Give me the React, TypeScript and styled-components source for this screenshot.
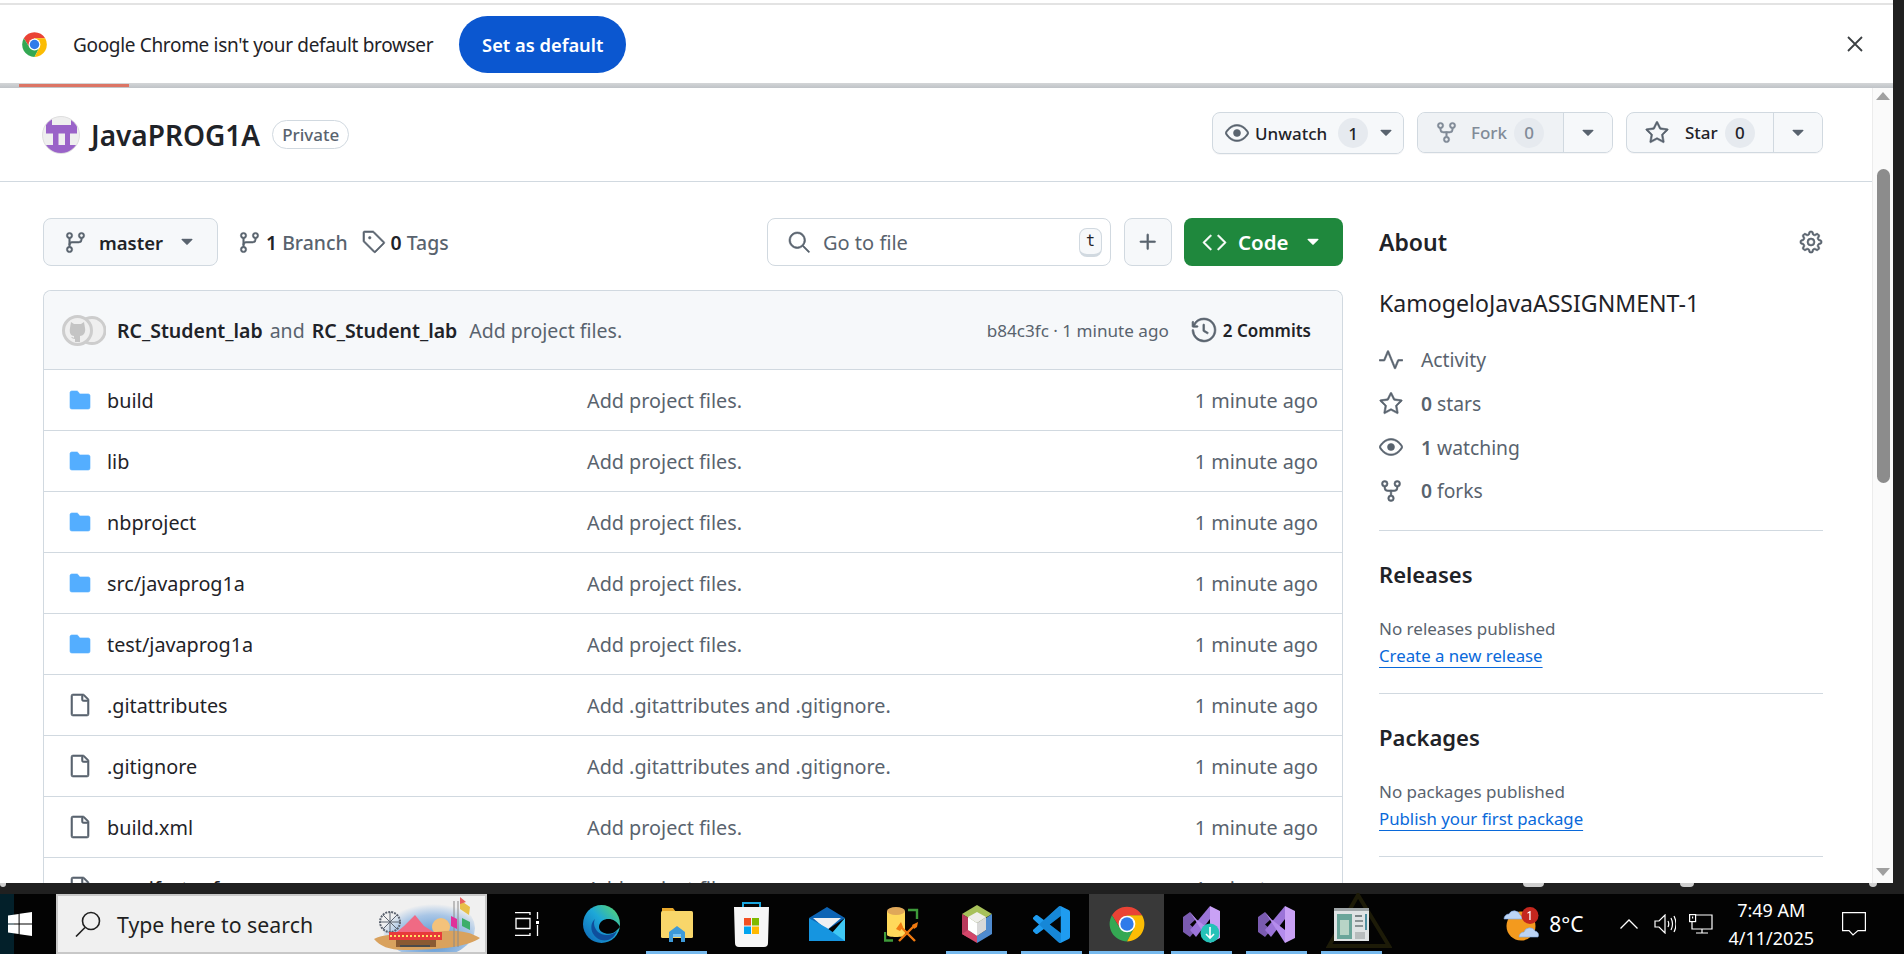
import React from "react";
import styled, { createGlobalStyle } from "styled-components";
import {
  GoCode,
  GoEye,
  GoFile,
  GoFileDirectoryFill,
  GoGear,
  GoGitBranch,
  GoHistory,
  GoPlus,
  GoPulse,
  GoRepoForked,
  GoSearch,
  GoStar,
  GoTag,
  GoTriangleDown,
} from "react-icons/go";

const FONT = `"Noto Sans", "Open Sans", "Liberation Sans", sans-serif`;

const GlobalStyle = createGlobalStyle`
  html, body {
    margin: 0;
    padding: 0;
    height: 100%;
    overflow: hidden;
    background: #000;
  }
  * {
    box-sizing: border-box;
  }
  body {
    font-family: ${FONT};
    color: #1f2328;
  }
`;

const Screen = styled.div`
  position: relative;
  width: 1904px;
  height: 954px;
  display: flex;
  flex-direction: column;
  overflow: hidden;
`;

const Desktop = styled.div`
  height: 883px;
  display: flex;
  background: #202020;
`;

const Browser = styled.div`
  width: 1893px;
  display: flex;
  flex-direction: column;
  background: #fff;
`;

const TopLine = styled.div`
  height: 5px;
  padding-top: 3px;
  background: #fff;
  &::after {
    content: "";
    display: block;
    height: 2px;
    background: #e3e3e3;
  }
`;

const Infobar = styled.div`
  position: relative;
  height: 78px;
  flex: none;
  display: flex;
  align-items: center;
  padding: 0 30px 0 21px;
  background: #fff;
`;

const InfoText = styled.span`
  margin: 2px 0 0 25px;
  font-size: 19px;
  letter-spacing: -0.33px;
`;

const DefaultButton = styled.button`
  height: 57px;
  width: 167px;
  margin-left: 26px;
  border: none;
  border-radius: 29px;
  background: #0b57d0;
  color: #fff;
  font-family: ${FONT};
  font-size: 18.3px;
  font-weight: 600;
`;

const CloseMark = styled.svg`
  margin-left: auto;
  width: 16px;
  height: 16px;
`;

const InfoEdge = styled.div`
  position: relative;
  height: 5px;
  flex: none;
  background: linear-gradient(#d4d6d8, #bfc3c7);
`;

const LoadBar = styled.div`
  position: absolute;
  left: 19px;
  top: 1px;
  width: 110px;
  height: 3px;
  background: #dc7565;
`;

const ViewRow = styled.div`
  flex: 1;
  min-height: 0;
  display: flex;
`;

const Page = styled.main`
  width: 1872px;
  overflow: hidden;
  svg[stroke-width="0"] {
    stroke-width: 0.6;
    flex: none;
  }
`;

const RepoHead = styled.header`
  height: 94px;
  display: flex;
  align-items: center;
  padding: 0 49px 0 42px;
  border-bottom: 1px solid #d1d9e0;
`;

const RepoAvatar = styled.svg`
  width: 38px;
  height: 38px;
  flex: none;
`;

const RepoName = styled.h1`
  margin: 0 0 0 11px;
  font-size: 28px;
  font-weight: 600;
`;

const PrivateLabel = styled.span`
  margin-left: 12px;
  height: 29px;
  padding: 0 9px;
  display: flex;
  align-items: center;
  border: 1px solid #d1d9e0;
  border-radius: 15px;
  color: #59636e;
  font-size: 17px;
  font-weight: 500;
`;

const HeadActions = styled.div`
  margin: 0 0 3px auto;
  display: flex;
  align-items: flex-start;
  gap: 13px;
`;

const ActionGroup = styled.div<{ $w: number; $raised?: boolean }>`
  width: ${(p) => p.$w}px;
  height: ${(p) => (p.$raised ? 42 : 41)}px;
  display: flex;
  border: 1px solid #d1d9e0;
  border-radius: 8px;
  background: #f6f8fa;
  overflow: hidden;
  box-shadow: 0 1px 0 rgba(31, 35, 40, 0.04);
  color: #59636e;
  font-size: 17px;
  font-weight: 500;
`;

const ActionMain = styled.div<{ $pad: number; $muted?: boolean }>`
  flex: 1;
  display: flex;
  align-items: center;
  padding-left: ${(p) => p.$pad}px;
  background: ${(p) => (p.$muted ? "#eff2f5" : "transparent")};
  color: ${(p) => (p.$muted ? "#818b98" : "#1f2328")};
`;

const ActionLabel = styled.span<{ $left: number }>`
  margin-left: ${(p) => p.$left}px;
`;

const Count = styled.span<{ $left: number }>`
  width: 30px;
  height: 30px;
  margin-left: ${(p) => p.$left}px;
  display: flex;
  align-items: center;
  justify-content: center;
  border-radius: 15px;
  background: #e6eaef;
  font-size: 17px;
`;

const ActionCaret = styled.div<{ $w: number; $split?: boolean }>`
  width: ${(p) => p.$w}px;
  flex: none;
  display: flex;
  align-items: center;
  justify-content: center;
  border-left: ${(p) => (p.$split ? "1px solid #d1d9e0" : "none")};
  background: #f6f8fa;
  color: #59636e;
`;

const Body = styled.div`
  display: grid;
  grid-template-columns: 1300px 444px;
  column-gap: 36px;
  padding: 36px 0 0 43px;
`;

const Toolbar = styled.div`
  height: 48px;
  display: flex;
  align-items: center;
  margin-bottom: 24px;
`;

const BranchButton = styled.div`
  width: 175px;
  height: 48px;
  display: flex;
  align-items: center;
  padding-left: 20px;
  border: 1px solid #d1d9e0;
  border-radius: 8px;
  background: #f6f8fa;
  color: #59636e;
`;

const BranchName = styled.span`
  margin: 0 14px 0 12px;
  color: #1f2328;
  font-size: 18.5px;
  font-weight: 600;
`;

const MetaLink = styled.span<{ $left: number }>`
  margin-left: ${(p) => p.$left}px;
  display: flex;
  align-items: center;
  gap: 5px;
  color: #59636e;
  font-size: 19.4px;
  font-weight: 500;
  strong {
    color: #1f2328;
    font-weight: 600;
  }
`;

const SearchBox = styled.div`
  width: 344px;
  height: 48px;
  margin-left: auto;
  display: flex;
  align-items: center;
  padding: 0 8px 0 19px;
  border: 1px solid #d1d9e0;
  border-radius: 8px;
  color: #59636e;
  font-size: 20px;
`;

const SearchText = styled.span`
  margin-left: 12px;
`;

const KeyHint = styled.kbd`
  width: 23px;
  height: 29px;
  margin-left: auto;
  display: flex;
  align-items: center;
  justify-content: center;
  border: 1px solid #d1d9e0;
  border-bottom-width: 3px;
  border-radius: 8px;
  background: #f6f8fa;
  color: #1f2328;
  font-family: "DejaVu Sans Mono", "Liberation Mono", monospace;
  font-size: 15px;
`;

const PlusButton = styled.div`
  width: 48px;
  height: 48px;
  margin-left: 13px;
  display: flex;
  align-items: center;
  justify-content: center;
  border: 1px solid #d1d9e0;
  border-radius: 8px;
  background: #f6f8fa;
  color: #59636e;
`;

const CodeButton = styled.div`
  width: 159px;
  height: 48px;
  margin-left: 12px;
  display: flex;
  align-items: center;
  padding-left: 18px;
  border-radius: 8px;
  background: #1f883d;
  color: #fff;
  font-size: 20.5px;
  font-weight: 600;
`;

const CodeLabel = styled.span`
  margin: 0 14px 0 11px;
`;

const FileTable = styled.div`
  border: 1px solid #d1d9e0;
  border-radius: 8px 8px 0 0;
  border-bottom: none;
`;

const CommitBar = styled.div`
  height: 78px;
  display: flex;
  align-items: center;
  padding: 0 31px 0 18px;
  border-radius: 8px 8px 0 0;
  background: #f6f8fa;
  color: #59636e;
  font-size: 19.5px;
`;

const Authors = styled.svg`
  width: 44px;
  height: 31px;
  flex: none;
  margin-right: 11px;
`;

const Author = styled.strong`
  color: #1f2328;
  font-weight: 600;
`;

const AndWord = styled.span`
  margin: 0 7px;
`;

const CommitMessage = styled.span`
  margin-left: 12px;
`;

const CommitHash = styled.span`
  margin-left: auto;
  font-size: 17.1px;
`;

const CommitCount = styled.span`
  margin-left: 22px;
  display: flex;
  align-items: center;
  gap: 6px;
  color: #1f2328;
  font-size: 17px;
  font-weight: 600;
  svg {
    color: #59636e;
  }
`;

const FileRow = styled.div`
  height: 61px;
  display: grid;
  grid-template-columns: 519px 1fr auto;
  align-items: center;
  padding: 0 24px;
  border-top: 1px solid #d1d9e0;
  font-size: 19.8px;
`;

const FileName = styled.span<{ $folder: boolean }>`
  display: flex;
  align-items: center;
  gap: 15px;
  color: #1f2328;
  svg {
    color: ${(p) => (p.$folder ? "#54aeff" : "#59636e")};
  }
`;

const FileMessage = styled.span`
  color: #59636e;
`;

const FileAge = styled.span`
  color: #59636e;
`;

const Side = styled.aside`
  display: flex;
  flex-direction: column;
`;

const AboutHead = styled.div`
  height: 48px;
  display: flex;
  align-items: center;
  justify-content: space-between;
  color: #59636e;
`;

const SideTitle = styled.h2<{ $size?: number }>`
  margin: 0;
  line-height: 30px;
  color: #1f2328;
  font-size: ${(p) => p.$size ?? 22}px;
  font-weight: 600;
`;

const Description = styled.p`
  margin: 22px 0 20px;
  line-height: 30px;
  font-size: 23.1px;
`;

const StatRow = styled.div`
  height: 43.7px;
  display: flex;
  align-items: center;
  gap: 18px;
  color: #59636e;
  font-size: 19.3px;
  strong {
    font-weight: 600;
  }
`;

const SideSection = styled.section`
  padding: 28px 0 24px;
  border-top: 1px solid #d1d9e0;
`;

const StatsEnd = styled.div`
  height: 17.2px;
`;

const SideNote = styled.p`
  margin: 26px 0 0;
  line-height: 27px;
  color: #59636e;
  font-size: 17px;
`;

const SideLink = styled.a`
  display: block;
  line-height: 27px;
  color: #0969da;
  font-size: 16.8px;
  text-decoration: underline;
  text-underline-offset: 5px;
`;

const Scrollbar = styled.div`
  width: 21px;
  flex: none;
  display: flex;
  flex-direction: column;
  align-items: center;
  padding: 4px 0 7px;
  border-left: 1px solid #ececec;
  background: #fafafa;
`;

const ArrowUp = styled.div`
  border: 7px solid transparent;
  border-top: none;
  border-bottom: 8px solid #a0a0a0;
`;

const ArrowDown = styled.div`
  margin-top: auto;
  border: 7px solid transparent;
  border-bottom: none;
  border-top: 8px solid #a0a0a0;
`;

const Thumb = styled.div`
  width: 13px;
  height: 314px;
  margin-top: 69px;
  border-radius: 7px;
  background: #8c8c8c;
`;

const EdgeStrip = styled.div`
  position: relative;
  height: 11px;
  flex: none;
  background: #202020;
`;

const StripMark = styled.span<{ $x: number; $w: number }>`
  position: absolute;
  left: ${(p) => p.$x}px;
  top: 0;
  width: ${(p) => p.$w}px;
  height: 4px;
  border-radius: 0 0 6px 6px;
  background: #cfcfcf;
`;

const Taskbar = styled.footer`
  position: relative;
  height: 60px;
  flex: none;
  display: flex;
  background: #030303;
  color: #fff;
`;

const StartArea = styled.div`
  width: 56px;
  flex: none;
  display: flex;
  align-items: center;
  padding-left: 8px;
  background: linear-gradient(90deg, #03202a 0 14px, #030303 14px);
`;

const SearchBar = styled.div`
  width: 431px;
  flex: none;
  display: flex;
  align-items: center;
  padding-left: 17px;
  border: 2px solid #c8c8c8;
  background: #f0f0f0;
  color: #1f1f1f;
  font-size: 21.3px;
`;

const SearchHint = styled.span`
  margin-left: 16px;
`;

const Doodle = styled.svg`
  width: 108px;
  height: 56px;
  margin-left: auto;
  flex: none;
  margin-right: 3px;
`;

const Slot = styled.div<{ $open?: boolean; $active?: boolean }>`
  position: relative;
  width: 75px;
  flex: none;
  display: flex;
  align-items: center;
  justify-content: center;
  background: ${(p) => (p.$active ? "#393939" : "transparent")};
  &::after {
    content: ${(p) => (p.$open ? '""' : "none")};
    position: absolute;
    left: ${(p) => (p.$active ? 0 : 7)}px;
    right: ${(p) => (p.$active ? 0 : 7)}px;
    bottom: 0;
    height: 3px;
    background: #76b9ed;
  }
`;

const Slots = styled.div`
  position: relative;
  z-index: 1;
  margin-left: 2px;
  display: flex;
`;

const GhostTriangle = styled.svg`
  position: absolute;
  left: 1326px;
  top: -1px;
  width: 66px;
  height: 56px;
`;

const Tray = styled.div`
  margin-left: auto;
  display: flex;
  align-items: center;
  padding-right: 38px;
`;

const Temperature = styled.span`
  margin: 0 36px 0 8px;
  font-size: 21px;
`;

const TrayIcon = styled.svg<{ $left: number }>`
  margin-left: ${(p) => p.$left}px;
  flex: none;
`;

const Clock = styled.div`
  margin: 0 28px 0 16px;
  display: flex;
  flex-direction: column;
  align-items: center;
  line-height: 28px;
  font-size: 18px;
`;

type RepoFile = { name: string; folder: boolean; message: string };

const FILES: RepoFile[] = [
  { name: "build", folder: true, message: "Add project files." },
  { name: "lib", folder: true, message: "Add project files." },
  { name: "nbproject", folder: true, message: "Add project files." },
  { name: "src/javaprog1a", folder: true, message: "Add project files." },
  { name: "test/javaprog1a", folder: true, message: "Add project files." },
  { name: ".gitattributes", folder: false, message: "Add .gitattributes and .gitignore." },
  { name: ".gitignore", folder: false, message: "Add .gitattributes and .gitignore." },
  { name: "build.xml", folder: false, message: "Add project files." },
  { name: "manifest.mf", folder: false, message: "Add project files." },
];

const ChromeLogo = ({ size }: { size: number }) => (
  <svg width={size} height={size} viewBox="0 0 48 48">
    <path fill="#ea4335" d="M5 13A22 22 0 0 1 43 13H24L15 29Z" />
    <path fill="#34a853" d="M5 13A22 22 0 0 0 24 46L33 29H15Z" />
    <path fill="#fbbc04" d="M43 13A22 22 0 0 1 24 46L33 29 24 13Z" />
    <circle cx="24" cy="24" r="10.5" fill="#fff" />
    <circle cx="24" cy="24" r="8.4" fill="#2f7bea" />
  </svg>
);

const WindowsLogo = () => (
  <svg width="24" height="24" viewBox="0 0 24 24" fill="#fff">
    <path d="M0 3.4 10.6 2v9.4H0ZM11.6 1.8 24 0v11.4H11.6ZM0 12.6h10.6V22L0 20.6ZM11.6 12.6H24V24l-12.4-1.8Z" />
  </svg>
);

const TaskViewIcon = () => (
  <svg width="24" height="24" viewBox="0 0 24 24" fill="none" stroke="#fff" strokeWidth="1.3">
    <path d="M0 .7h15V3M0 23.3h15V21M1 6.5h14v10H1ZM22.5 0v7M22.5 13v11" />
    <rect x="21" y="9" width="3" height="3" fill="#fff" stroke="none" />
  </svg>
);

const EdgeIcon = () => (
  <svg width="37" height="38" viewBox="0 0 37 38">
    <defs>
      <linearGradient id="edgeRing" x1="0" y1="1" x2="1" y2="0">
        <stop offset="0" stopColor="#0c62b4" />
        <stop offset="0.55" stopColor="#1ea8d8" />
        <stop offset="1" stopColor="#5fdc63" />
      </linearGradient>
    </defs>
    <ellipse cx="18.5" cy="19" rx="18.5" ry="19" fill="url(#edgeRing)" />
    <path fill="#030303" d="M37 22C33 14 25 12 19 16c-4 3-4 9 0 11 5 3 12 2 15-2l3-3Z" />
    <path fill="#0f4f9c" d="M12 14C6 19 7 31 18 35c8 2 14-3 16-9-6 5-14 5-19 1-4-4-5-9-3-13Z" />
  </svg>
);

const ExplorerIcon = () => (
  <svg width="32" height="36" viewBox="0 0 32 36">
    <path fill="#e9a92c" d="M1 2h11l3 4H1Z" />
    <rect x="0" y="5" width="32" height="27" rx="1.5" fill="#f8d66a" />
    <path fill="#3d9ad9" d="M8 26 16 20l8 6v10h-4v-6h-8v6H8Z" />
    <rect x="12" y="28" width="8" height="3" fill="#7ac4f2" />
  </svg>
);

const StoreIcon = () => (
  <svg width="35" height="47" viewBox="0 0 35 47">
    <path fill="none" stroke="#19a7e0" strokeWidth="2" d="M9 10V2h17v8" />
    <path fill="#f6f6f6" d="M0 6h35l-1 36a4 4 0 0 1-4 4H5a4 4 0 0 1-4-4Z" />
    <rect x="10" y="17" width="7" height="7.5" fill="#f25022" />
    <rect x="18" y="17" width="7" height="7.5" fill="#7fba00" />
    <rect x="10" y="25.5" width="7" height="7.5" fill="#00a4ef" />
    <rect x="18" y="25.5" width="7" height="7.5" fill="#ffb900" />
  </svg>
);

const MailIcon = () => (
  <svg width="36" height="34" viewBox="0 0 36 34">
    <path fill="#0c64b5" d="M0 11 18 0l18 11-18 12Z" />
    <path fill="#eef0f2" d="M4 11h28l-14 12Z" />
    <path fill="#3fc8f4" d="M36 11v23H16L36 11Z" />
    <path fill="#1695e0" d="M0 11v23h36L18 21Z" />
  </svg>
);

const DbToolIcon = () => (
  <svg width="35" height="35" viewBox="0 0 35 35">
    <path fill="#ffd95a" d="M3 4h18v24c0 1-4 2-9 2s-9-1-9-2Z" />
    <ellipse cx="12" cy="4" rx="9" ry="4" fill="#e0a859" />
    <path fill="none" stroke="#3e9a3a" strokeWidth="2.4" d="M24 3h9v9M1 25v8.5h8" />
    <path fill="none" stroke="#f07a10" strokeWidth="2.4" d="M15 34 31 18M17 20l14 14" />
    <path fill="#f07a10" d="M12 22l5-7 2 5-3 4ZM28 18l6-3-1 5-3 2Z" />
  </svg>
);

const NetbeansIcon = () => (
  <svg width="32" height="38" viewBox="0 0 32 38">
    <path fill="#a7c15a" d="M16 0 31 9 16 18 1 9Z" />
    <path fill="#b83a5c" d="M1 9v20l7 4V13Z" />
    <path fill="#d3466a" d="M1 29 16 38v-7L7 25Z" />
    <path fill="#4f8bcf" d="M31 9v20L16 38v-7l9-6V13Z" />
    <path fill="#eeeeea" d="M16 7 25 12 16 18 7 12Z" />
    <path fill="#fff" d="M7 12 16 18v13L7 25Z" />
    <path fill="#d8d8d8" d="M25 12 16 18v13l9-6Z" />
  </svg>
);

const VsCodeIcon = () => (
  <svg width="37" height="37" viewBox="0 0 24 24">
    <path
      fill="#1f9cf0"
      d="M23.15 2.587 18.21.21a1.494 1.494 0 0 0-1.705.29l-9.46 8.63-4.12-3.128a.999.999 0 0 0-1.276.057L.327 7.261A1 1 0 0 0 .326 8.74L3.899 12 .326 15.26a1 1 0 0 0 .001 1.479L1.65 17.94a.999.999 0 0 0 1.276.057l4.12-3.128 9.46 8.63a1.492 1.492 0 0 0 1.704.29l4.942-2.377A1.5 1.5 0 0 0 24 20.06V3.939a1.5 1.5 0 0 0-.85-1.352zm-5.146 14.861L10.826 12l7.178-5.448v10.896z"
    />
    <path fill="#0a6fb8" d="M18 0v6.6L10.8 12 18 17.4V24l-.8-.2L7 14.9 3.9 12 7 9.1 17.2.4Z" opacity="0.45" />
  </svg>
);

const VsIcon = ({ badge }: { badge?: boolean }) => (
  <svg width="37" height="37" viewBox="0 0 37 37">
    <path fill="#7a5bb0" d="M0 11 7 6l6 7-6 5.5 6 5.5-6 7-7-5Z" />
    <path fill="#9b74d8" d="M27 0 7 24 13 31 27 13Z" />
    <path fill="#b48cec" d="M7 6 27 37l0-13L13 13Z" />
    <path fill="#c9a1f5" d="M27 0 37 5v27L27 37Z" />
    {badge && (
      <g>
        <circle cx="27" cy="27" r="9.5" fill="#25c2b8" />
        <path fill="none" stroke="#fff" strokeWidth="1.6" d="M27 21v11M23 28l4 4 4-4" />
      </g>
    )}
  </svg>
);

const PreviewIcon = () => (
  <svg width="35" height="33" viewBox="0 0 35 33">
    <rect width="35" height="33" fill="#dfe3e4" />
    <rect width="35" height="3" fill="#9fa6a8" />
    <rect x="3" y="6" width="15" height="25" fill="#6aa59a" />
    <rect x="6" y="12" width="9" height="15" fill="#b8d4c6" />
    <rect x="21" y="7" width="7" height="2" fill="#7a8486" />
    <rect x="21" y="12" width="8" height="2" fill="#8b9496" />
    <rect x="21" y="17" width="8" height="2" fill="#8b9496" />
    <rect x="21" y="24" width="10" height="7" fill="#b7bcbd" />
    <rect x="31" y="6" width="2" height="16" fill="#4d8fa0" />
  </svg>
);

const CarnivalDoodle = () => (
  <Doodle viewBox="0 0 108 56">
    <defs>
      <radialGradient id="sky" cx="0.55" cy="0.7" r="0.6">
        <stop offset="0" stopColor="#4f8fd0" />
        <stop offset="0.7" stopColor="#a9c6e6" />
        <stop offset="1" stopColor="#f0f0f0" />
      </radialGradient>
    </defs>
    <ellipse cx="55" cy="32" rx="46" ry="30" fill="url(#sky)" />
    <circle cx="16" cy="26" r="10" fill="none" stroke="#5d6470" strokeWidth="2" strokeDasharray="2 1" />
    <path stroke="#5d6470" strokeWidth="1" d="M6 26h20M16 16v20M9 19l14 14M23 19 9 33" />
    <circle cx="67" cy="31" r="9" fill="#f4c27a" />
    <path fill="#d9a25e" d="M0 43C15 36 30 40 50 38 70 34 90 32 106 42 95 50 70 54 30 54 15 54 6 50 0 43Z" />
    <path fill="#f06a84" d="M18 40 30 30 41 19 50 30 66 40Z" />
    <rect x="15" y="36" width="53" height="8" fill="#e83a3a" />
    <path stroke="#ffe066" strokeWidth="2" strokeDasharray="2 2" d="M16 40h51" />
    <rect x="22" y="44" width="40" height="7" fill="#8a5a32" />
    <rect x="26" y="49" width="30" height="2" fill="#4a4a4a" />
    <path stroke="#8a8a8a" strokeWidth="1" d="M80 5v46M84 5v46" fill="none" />
    <path fill="#e8c04a" d="M86 4 96 11l-1 8-9-6Z" />
    <path fill="#e0309a" d="M77 20l6 3v10l-6-3Z" />
    <path fill="#3cae6a" d="M88 22l8 4v8l-8-4Z" />
    <path fill="#e86060" d="M86 1l6 5-6 2Z" />
  </Doodle>
);

const WeatherIcon = () => (
  <TrayIcon $left={0} width="38" height="34" viewBox="0 0 38 34">
    <circle cx="18" cy="19" r="14.5" fill="#f39a1e" />
    <path fill="#bcd4f5" stroke="#7ea5de" strokeWidth="0.6" d="M1 12a5 5 0 0 1 5-5 6 6 0 0 1 11 1 4 4 0 0 1 2 4Z" />
    <path fill="#bcd4f5" stroke="#7ea5de" strokeWidth="0.6" d="M16 30a5 5 0 0 1 5-5 6 6 0 0 1 11-1 4 4 0 0 1 3 6Z" />
    <circle cx="27" cy="8.5" r="8.5" fill="#c4271e" />
    <path fill="#fff" d="M27.6 4v9h-1.3V5.8l-1.8 1V5.5L27 4Z" />
  </TrayIcon>
);

const App = () => (
  <>
    <GlobalStyle />
    <Screen>
      <Desktop>
        <Browser>
          <TopLine />
          <Infobar>
            <ChromeLogo size={27} />
            <InfoText>Google Chrome isn&apos;t your default browser</InfoText>
            <DefaultButton>Set as default</DefaultButton>
            <CloseMark viewBox="0 0 16 16" fill="none" stroke="#3c4043" strokeWidth="1.8">
              <path d="M1 1l14 14M15 1 1 15" />
            </CloseMark>
          </Infobar>
          <InfoEdge>
            <LoadBar />
          </InfoEdge>
          <ViewRow>
            <Page>
              <RepoHead>
                <RepoAvatar viewBox="0 0 38 38">
                  <defs>
                    <clipPath id="avatarClip">
                      <circle cx="19" cy="19" r="18" />
                    </clipPath>
                  </defs>
                  <circle cx="19" cy="19" r="18.5" fill="#efefef" stroke="#dedede" />
                  <path
                    clipPath="url(#avatarClip)"
                    fill="#9a63c8"
                    fillRule="evenodd"
                    d="M4 3h6v6h19V3h6v14.5h-7V29h7v9H4v-9h7V17.5H4ZM16.5 17.5V29H23V17.5Z"
                  />
                </RepoAvatar>
                <RepoName>JavaPROG1A</RepoName>
                <PrivateLabel>Private</PrivateLabel>
                <HeadActions>
                  <ActionGroup $w={192} $raised>
                    <ActionMain $pad={12}>
                      <GoEye size={24} color="#59636e" />
                      <ActionLabel $left={6}>Unwatch</ActionLabel>
                      <Count $left={11}>1</Count>
                    </ActionMain>
                    <ActionCaret $w={34}>
                      <GoTriangleDown size={20} />
                    </ActionCaret>
                  </ActionGroup>
                  <ActionGroup $w={196}>
                    <ActionMain $pad={17} $muted>
                      <GoRepoForked size={23} />
                      <ActionLabel $left={13}>Fork</ActionLabel>
                      <Count $left={7}>0</Count>
                    </ActionMain>
                    <ActionCaret $w={49} $split>
                      <GoTriangleDown size={20} />
                    </ActionCaret>
                  </ActionGroup>
                  <ActionGroup $w={197}>
                    <ActionMain $pad={18}>
                      <GoStar size={24} color="#59636e" />
                      <ActionLabel $left={16}>Star</ActionLabel>
                      <Count $left={7}>0</Count>
                    </ActionMain>
                    <ActionCaret $w={49} $split>
                      <GoTriangleDown size={20} />
                    </ActionCaret>
                  </ActionGroup>
                </HeadActions>
              </RepoHead>
              <Body>
                <div>
                  <Toolbar>
                    <BranchButton>
                      <GoGitBranch size={23} />
                      <BranchName>master</BranchName>
                      <GoTriangleDown size={20} />
                    </BranchButton>
                    <MetaLink $left={20}>
                      <GoGitBranch size={23} />
                      <span>
                        <strong>1</strong> Branch
                      </span>
                    </MetaLink>
                    <MetaLink $left={14}>
                      <GoTag size={24} />
                      <span>
                        <strong>0</strong> Tags
                      </span>
                    </MetaLink>
                    <SearchBox>
                      <GoSearch size={24} />
                      <SearchText>Go to file</SearchText>
                      <KeyHint>t</KeyHint>
                    </SearchBox>
                    <PlusButton>
                      <GoPlus size={26} />
                    </PlusButton>
                    <CodeButton>
                      <GoCode size={25} />
                      <CodeLabel>Code</CodeLabel>
                      <GoTriangleDown size={20} />
                    </CodeButton>
                  </Toolbar>
                  <FileTable>
                    <CommitBar>
                      <Authors viewBox="0 0 44 31">
                        <circle cx="30" cy="15.5" r="13" fill="#efefef" stroke="#cdcdcd" strokeWidth="3" />
                        <circle cx="15.5" cy="15.5" r="14" fill="#efefef" stroke="#cdcdcd" strokeWidth="3" />
                        <path
                          fill="#c4c4c4"
                          d="M9 7l3 2h7l3-2 1 6c1 5-2 8-5 8v6h-5v-3c-2 0-3-1-4-2 1 0 2 0 3 1v-2c-3 0-5-3-4-8Z"
                        />
                      </Authors>
                      <Author>RC_Student_lab</Author>
                      <AndWord>and</AndWord>
                      <Author>RC_Student_lab</Author>
                      <CommitMessage>Add project files.</CommitMessage>
                      <CommitHash>b84c3fc · 1 minute ago</CommitHash>
                      <CommitCount>
                        <GoHistory size={26} />2 Commits
                      </CommitCount>
                    </CommitBar>
                    {FILES.map((f) => (
                      <FileRow key={f.name}>
                        <FileName $folder={f.folder}>
                          {f.folder ? <GoFileDirectoryFill size={24} /> : <GoFile size={24} />}
                          {f.name}
                        </FileName>
                        <FileMessage>{f.message}</FileMessage>
                        <FileAge>1 minute ago</FileAge>
                      </FileRow>
                    ))}
                  </FileTable>
                </div>
                <Side>
                  <AboutHead>
                    <SideTitle $size={23}>About</SideTitle>
                    <GoGear size={24} />
                  </AboutHead>
                  <Description>KamogeloJavaASSIGNMENT-1</Description>
                  <StatRow>
                    <GoPulse size={24} />
                    Activity
                  </StatRow>
                  <StatRow>
                    <GoStar size={24} />
                    <span>
                      <strong>0</strong> stars
                    </span>
                  </StatRow>
                  <StatRow>
                    <GoEye size={24} />
                    <span>
                      <strong>1</strong> watching
                    </span>
                  </StatRow>
                  <StatRow>
                    <GoRepoForked size={24} />
                    <span>
                      <strong>0</strong> forks
                    </span>
                  </StatRow>
                  <StatsEnd />
                  <SideSection>
                    <SideTitle>Releases</SideTitle>
                    <SideNote>No releases published</SideNote>
                    <SideLink>Create a new release</SideLink>
                  </SideSection>
                  <SideSection>
                    <SideTitle>Packages</SideTitle>
                    <SideNote>No packages published</SideNote>
                    <SideLink>Publish your first package</SideLink>
                  </SideSection>
                  <SideSection />
                </Side>
              </Body>
            </Page>
            <Scrollbar>
              <ArrowUp />
              <Thumb />
              <ArrowDown />
            </Scrollbar>
          </ViewRow>
        </Browser>
      </Desktop>
      <EdgeStrip>
        <StripMark $x={0} $w={6} />
        <StripMark $x={1523} $w={21} />
        <StripMark $x={1680} $w={14} />
        <StripMark $x={1869} $w={8} />
      </EdgeStrip>
      <Taskbar>
        <StartArea>
          <WindowsLogo />
        </StartArea>
        <SearchBar>
          <svg width="26" height="26" viewBox="0 0 26 26" fill="none" stroke="#1f1f1f" strokeWidth="1.6">
            <circle cx="16" cy="10" r="8.5" />
            <path d="M10 16.5 1 25.5" />
          </svg>
          <SearchHint>Type here to search</SearchHint>
          <CarnivalDoodle />
        </SearchBar>
        <Slots>
          <Slot>
            <TaskViewIcon />
          </Slot>
          <Slot>
            <EdgeIcon />
          </Slot>
          <Slot $open>
            <ExplorerIcon />
          </Slot>
          <Slot>
            <StoreIcon />
          </Slot>
          <Slot>
            <MailIcon />
          </Slot>
          <Slot>
            <DbToolIcon />
          </Slot>
          <Slot $open>
            <NetbeansIcon />
          </Slot>
          <Slot $open>
            <VsCodeIcon />
          </Slot>
          <Slot $open $active>
            <ChromeLogo size={38} />
          </Slot>
          <Slot $open>
            <VsIcon badge />
          </Slot>
          <Slot $open>
            <VsIcon />
          </Slot>
          <Slot $open>
            <PreviewIcon />
          </Slot>
        </Slots>
        <GhostTriangle viewBox="0 0 66 56" fill="none" stroke="#1d1b08" strokeWidth="4">
          <path d="M32 2 3 53h60Z" />
        </GhostTriangle>
        <Tray>
          <WeatherIcon />
          <Temperature>8°C</Temperature>
          <TrayIcon $left={0} width="18" height="10" viewBox="0 0 18 10" fill="none" stroke="#fff" strokeWidth="1.3">
            <path d="M.5 9.5 9 1l8.5 8.5" />
          </TrayIcon>
          <TrayIcon $left={16} width="22" height="20" viewBox="0 0 22 20" fill="none" stroke="#fff" strokeWidth="1.2">
            <path d="M1 7h4l6-6v18l-6-6H1ZM14 7c1 2 1 4 0 6M17 4c2 4 2 8 0 12M20 2c2.5 5 2.5 11 0 16" />
          </TrayIcon>
          <TrayIcon $left={13} width="24" height="20" viewBox="0 0 24 20" fill="none" stroke="#fff" strokeWidth="1.2">
            <path d="M7 1h16v14H3V8M13 15v4M7 19h12" />
            <rect x=".6" y=".6" width="6" height="7" />
            <path d="M3.6 2.5v2" />
          </TrayIcon>
          <Clock>
            <span>7:49 AM</span>
            <span>4/11/2025</span>
          </Clock>
          <TrayIcon $left={0} width="24" height="24" viewBox="0 0 24 24" fill="none" stroke="#fff" strokeWidth="1.2">
            <path d="M.6.6h22.8v18h-7.4L11 23l-4-4.4H.6Z" />
          </TrayIcon>
        </Tray>
      </Taskbar>
    </Screen>
  </>
);

export default App;
